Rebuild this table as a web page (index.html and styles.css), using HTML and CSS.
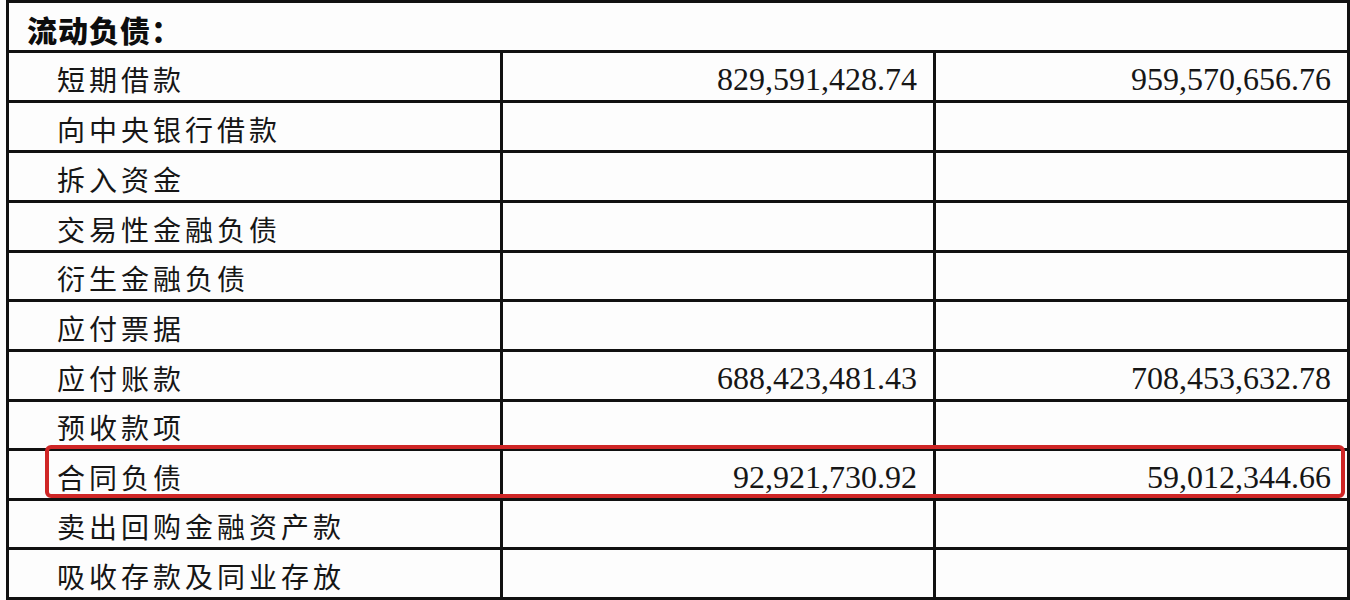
FILE: index.html
```html
<!DOCTYPE html>
<html lang="zh-CN">
<head>
<meta charset="utf-8">
<title>流动负债</title>
<link rel="stylesheet" href="styles.css">
</head>
<body>
<div class="sheet">
  <div class="grid">
    <div class="cell head">流动负债：</div>

    <div class="cell label">短期借款</div>
    <div class="cell num">829,591,428.74</div>
    <div class="cell num">959,570,656.76</div>

    <div class="cell label">向中央银行借款</div>
    <div class="cell num"></div>
    <div class="cell num"></div>

    <div class="cell label">拆入资金</div>
    <div class="cell num"></div>
    <div class="cell num"></div>

    <div class="cell label">交易性金融负债</div>
    <div class="cell num"></div>
    <div class="cell num"></div>

    <div class="cell label">衍生金融负债</div>
    <div class="cell num"></div>
    <div class="cell num"></div>

    <div class="cell label">应付票据</div>
    <div class="cell num"></div>
    <div class="cell num"></div>

    <div class="cell label">应付账款</div>
    <div class="cell num">688,423,481.43</div>
    <div class="cell num">708,453,632.78</div>

    <div class="cell label">预收款项</div>
    <div class="cell num"></div>
    <div class="cell num"></div>

    <div class="cell label">合同负债</div>
    <div class="cell num">92,921,730.92</div>
    <div class="cell num">59,012,344.66</div>

    <div class="cell label">卖出回购金融资产款</div>
    <div class="cell num"></div>
    <div class="cell num"></div>

    <div class="cell label">吸收存款及同业存放</div>
    <div class="cell num"></div>
    <div class="cell num"></div>
  </div>
  <div class="highlight"></div>
</div>
</body>
</html>
```

FILE: styles.css
```css
html, body {
  margin: 0;
  padding: 0;
  background: #fdfdfd;
  overflow: hidden;
}

.sheet {
  position: relative;
  width: 1350px;
  height: 600px;
  padding-left: 6px;
  box-sizing: border-box;
}

.grid {
  display: grid;
  grid-template-columns: 491px 430px 411px;
  grid-template-rows: 47px 47px 47px 47px 47px 46px 47px 47px 46px 47px 46px 47px;
  gap: 3px;
  padding: 3px;
  background: #111;
  width: 1344px;
  box-sizing: border-box;
}

.cell {
  background: #fdfdfd;
  color: #161616;
  display: flex;
  align-items: center;
}

.head {
  grid-column: 1 / 4;
  padding: 5px 0 0 18px;
  font-family: "Noto Sans CJK SC", sans-serif;
  font-weight: 900;
  font-size: 30px;
  letter-spacing: 1px;
  color: #0d0d0d;
}

.label {
  padding: 4px 0 0 48px;
  font-family: "Noto Sans CJK SC", sans-serif;
  font-weight: 400;
  font-size: 28px;
  letter-spacing: 4px;
}

.num {
  justify-content: flex-end;
  padding: 6px 16px 0 0;
  font-family: "Liberation Serif", "Times New Roman", serif;
  font-size: 32px;
}

.highlight {
  position: absolute;
  left: 45px;
  top: 445px;
  width: 1300px;
  height: 53px;
  border: 4px solid #cf2626;
  border-radius: 6px;
  box-sizing: border-box;
}
```
